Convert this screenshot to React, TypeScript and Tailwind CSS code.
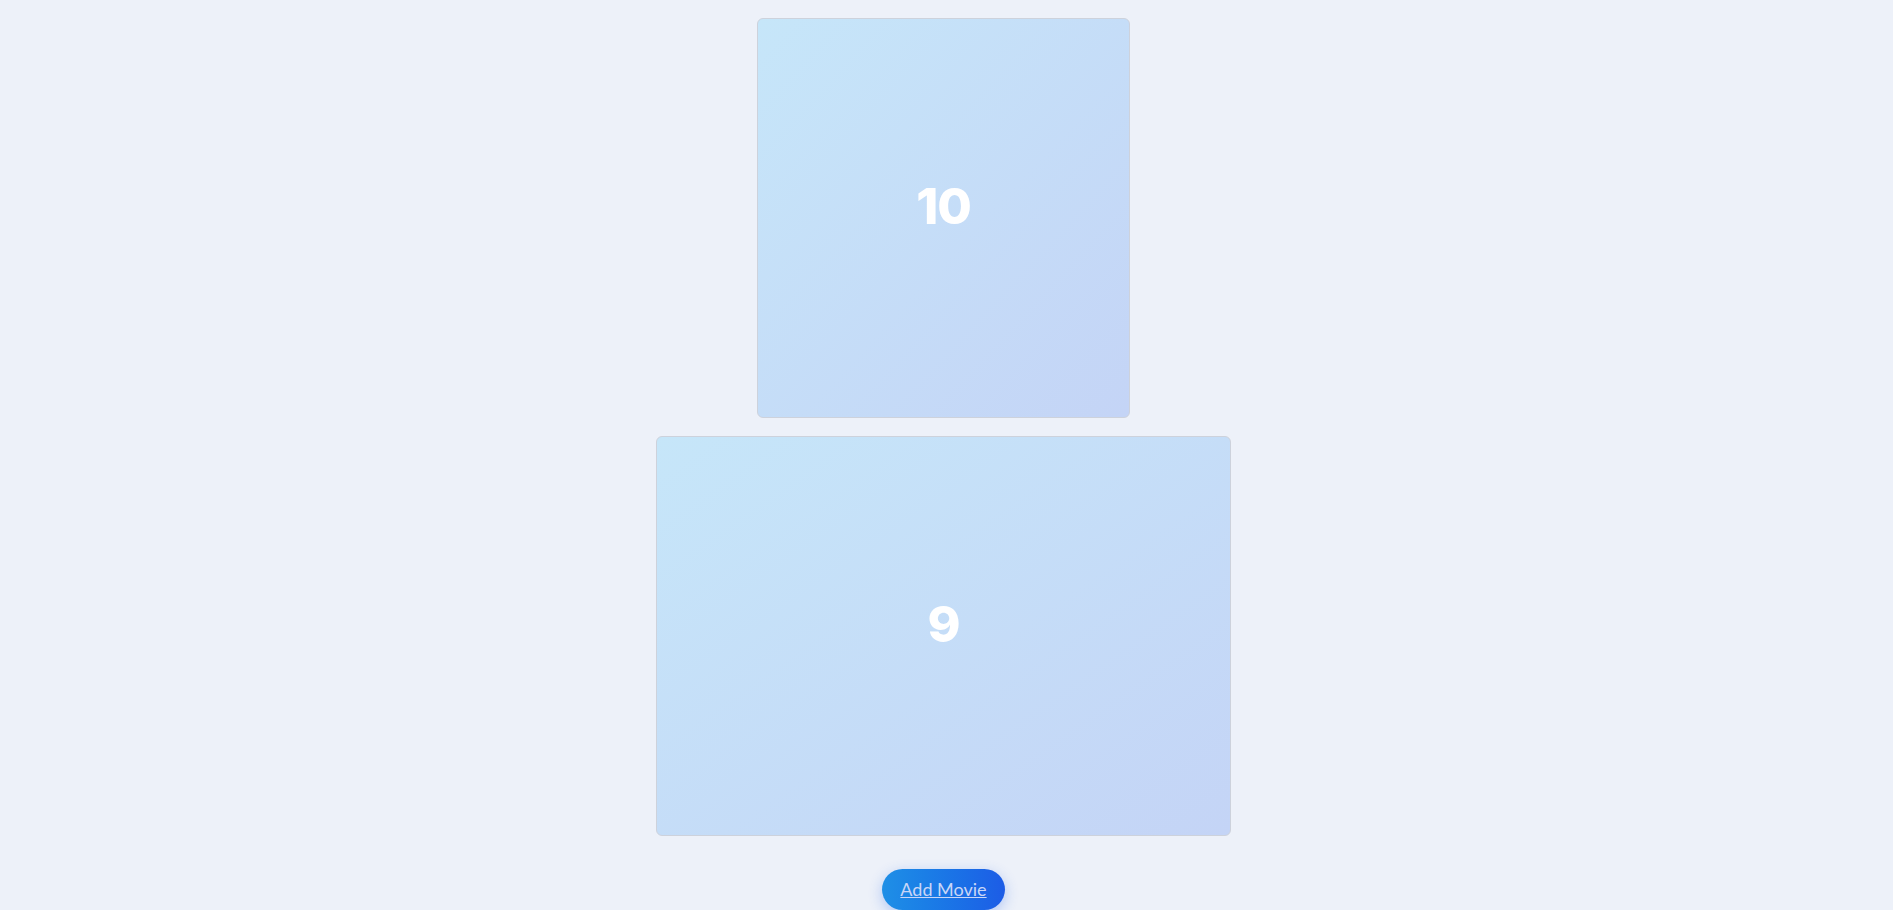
import React from "react";

const movies = [
  { id: 10, w: "w-[373px]" },
  { id: 9, w: "w-[575px]" },
];

export default function App() {
  return (
    <div className="min-h-screen w-full bg-[#edf1f9] font-['Lato','Open_Sans',sans-serif]">
      <div className="flex flex-col items-center gap-[18px] pt-[18px] pr-[6px]">
        {movies.map((m) => (
          <div
            key={m.id}
            className={`${m.w} flex h-[400px] items-center justify-center rounded-md border border-[#cdd2dc] bg-gradient-to-br from-[#c6e6f9] to-[#c4d4f6]`}
          >
            <span className="pb-[24px] font-['Inter',sans-serif] text-[50px] font-extrabold tracking-[-1px] text-white">
              {m.id}
            </span>
          </div>
        ))}
        <button
          type="button"
          className="mt-[15px] rounded-full bg-gradient-to-r from-[#1f8fe6] to-[#1d5ce6] px-[18px] py-[7px] text-[18px] leading-[27px] text-[#c9d6f7] underline shadow-[0_4px_14px_rgba(37,99,235,0.3)]"
        >
          Add Movie
        </button>
      </div>
    </div>
  );
}
